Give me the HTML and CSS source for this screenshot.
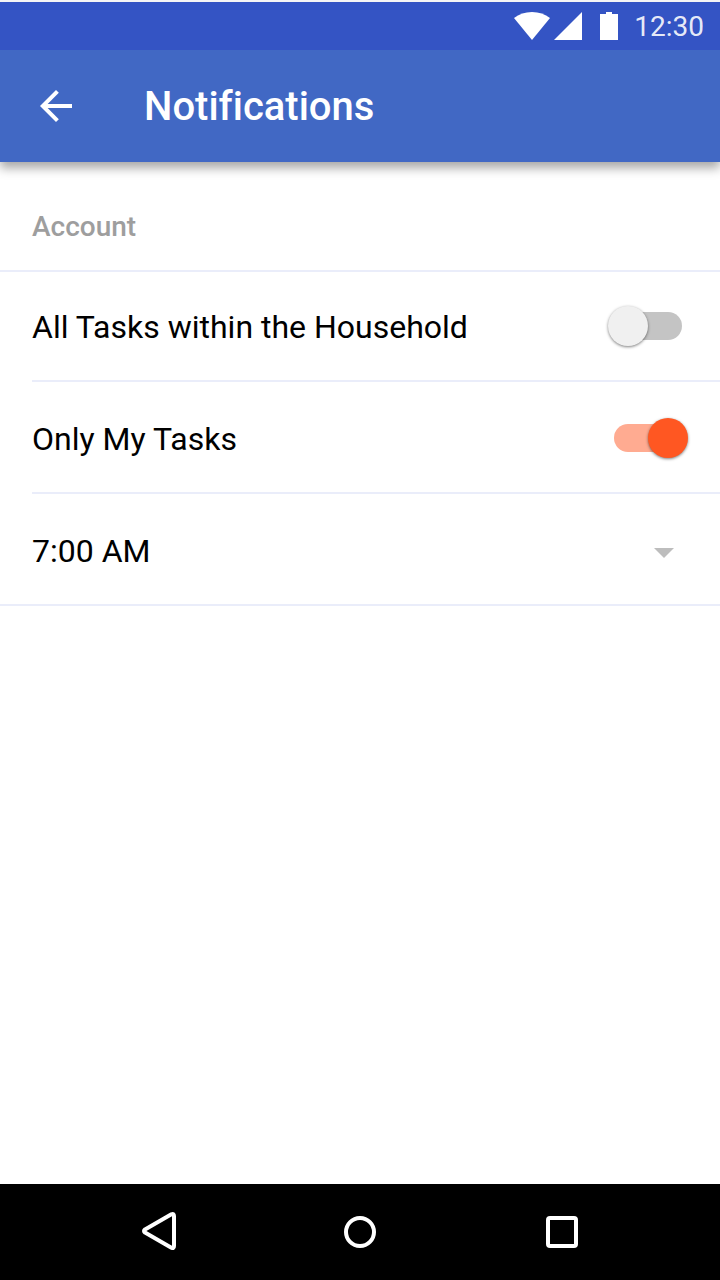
FILE: index.html
```html
<!DOCTYPE html>
<html lang="en">
<head>
  <meta charset="UTF-8" />
  <meta name="viewport" content="width=device-width, initial-scale=1.0" />
  <title>Notifications</title>
  <link rel="stylesheet" href="styles.css">
</head>
<body>
  <!-- Status bar -->
  <div class="status-bar">
    <svg class="status-wifi" width="36" height="28" viewBox="0 0 36 28" aria-hidden="true">
      <path d="M18 28 L0 6 C5 2 11 0 18 0 C25 0 31 2 36 6 Z" fill="#fff" />
    </svg>
    <svg class="status-signal" width="28" height="28" viewBox="0 0 28 28" aria-hidden="true">
      <path d="M0 28 H28 V0 Z" fill="#fff" />
    </svg>
    <svg class="status-battery" width="18" height="28" viewBox="0 0 18 28" aria-hidden="true">
      <path d="M6 0 H12 V2 H18 V28 H0 V2 H6 Z" fill="#fff" />
    </svg>
    <span class="status-time">12:30</span>
  </div>

  <header class="app-bar">
    <button type="button" class="back-btn" aria-label="Back">
      <svg width="48" height="48" viewBox="0 0 24 24" aria-hidden="true">
        <path d="M20 11H7.83l5.59-5.59L12 4l-8 8 8 8 1.41-1.41L7.83 13H20v-2z" fill="#fff" />
      </svg>
    </button>
    <h1>Notifications</h1>
  </header>

  <main>
    <h2 class="section-title">Account</h2>

    <div class="settings-list">
      <div class="setting">
        <label for="all-tasks">All Tasks within the Household</label>
        <input type="checkbox" class="switch" id="all-tasks" />
      </div>
      <div class="setting">
        <label for="my-tasks">Only My Tasks</label>
        <input type="checkbox" class="switch" id="my-tasks" checked />
      </div>
      <div class="setting time-setting">
        <select class="time-select" id="reminder-time" aria-label="Reminder time">
          <option selected>7:00 AM</option>
        </select>
        <svg class="select-arrow" width="20" height="10" viewBox="0 0 20 10" aria-hidden="true">
          <path d="M0 0 H20 L10 10 Z" fill="#bdbdbd" />
        </svg>
      </div>
    </div>
  </main>

  <!-- System navigation -->
  <nav class="nav-bar">
    <button type="button" aria-label="Back">
      <svg width="48" height="48" viewBox="0 0 48 48" aria-hidden="true">
        <path d="M11 21.4 L37.4 6.3 Q40 5 40 8 V38 Q40 41 37.4 39.7 L11 24.6 Q9 23 11 21.4 Z" />
      </svg>
    </button>
    <button type="button" aria-label="Home">
      <svg width="48" height="48" viewBox="0 0 48 48" aria-hidden="true">
        <circle cx="24" cy="24" r="14" />
      </svg>
    </button>
    <button type="button" aria-label="Recent apps">
      <svg width="48" height="48" viewBox="0 0 48 48" aria-hidden="true">
        <rect x="10" y="10" width="28" height="28" rx="2" />
      </svg>
    </button>
  </nav>
</body>
</html>
```
FILE: styles.css
```css
/* General Styles */
* {
  box-sizing: border-box;
}

body {
  display: flex;
  flex-direction: column;
  min-height: 100vh;
  margin: 0;
  font-family: Roboto, "Liberation Sans", sans-serif;
  font-size: 32px;
  font-variant-ligatures: none;
  color: #000;
  background-color: #fff;
}

button {
  display: flex;
  align-items: center;
  justify-content: center;
  padding: 0;
  background: none;
  border: none;
  cursor: pointer;
}

/* Status Bar */
.status-bar {
  position: relative;
  z-index: 1;
  display: flex;
  align-items: center;
  justify-content: flex-end;
  height: 50px;
  padding-right: 16px;
  background-color: #3454c4;
  border-top: 2px solid #f5f5f5;
}

.status-signal {
  margin-left: 4px;
}

.status-battery {
  margin-left: 18px;
}

.status-time {
  margin-left: 16px;
  padding-top: 2px;
  font-size: 28px;
  line-height: 32px;
  color: rgba(255, 255, 255, 0.9);
}

/* App Bar */
.app-bar {
  display: flex;
  align-items: center;
  gap: 64px;
  height: 112px;
  padding: 0 32px;
  color: #fff;
  background-color: #4168c4;
  box-shadow: 0 6px 10px rgba(0, 0, 0, 0.35);
}

.back-btn {
  width: 48px;
  height: 48px;
}

.app-bar h1 {
  margin: 0;
  padding-top: 2px;
  font-size: 40px;
  font-weight: 500;
  line-height: 48px;
}

/* Settings */
main {
  flex: 1;
}

.section-title {
  margin: 0;
  padding: 48px 32px 26px;
  font-size: 28px;
  font-weight: 500;
  line-height: 34px;
  color: #9e9e9e;
  border-bottom: 2px solid #eaedfa;
}

.settings-list {
  padding-left: 32px;
  border-bottom: 2px solid #eaedfa;
}

.setting {
  display: flex;
  align-items: center;
  justify-content: space-between;
  padding: 34px 32px 34px 0;
  line-height: 38px;
}

.setting + .setting {
  padding-top: 36px;
  border-top: 2px solid #eaedfa;
}

.setting label {
  padding-top: 2px;
}

/* Toggle Switch */
.switch {
  appearance: none;
  display: flex;
  align-items: center;
  justify-content: center;
  position: relative;
  width: 80px;
  height: 40px;
  margin: 0;
  cursor: pointer;
}

.switch::before {
  content: "";
  width: 68px;
  height: 28px;
  border-radius: 14px;
  background-color: #c4c4c4;
}

.switch::after {
  content: "";
  position: absolute;
  top: 0;
  left: 0;
  width: 40px;
  height: 40px;
  border-radius: 50%;
  background-color: #f0f0f0;
  box-shadow: 0 1px 3px rgba(0, 0, 0, 0.5);
}

.switch:checked::before {
  background-color: #ffab91;
}

.switch:checked::after {
  left: 40px;
  background-color: #ff5722;
}

/* Time Drop-down */
.time-setting {
  position: relative;
}

.time-select {
  appearance: none;
  flex: 1;
  height: 40px;
  padding: 2px 0 0;
  font: inherit;
  color: inherit;
  background: none;
  border: none;
  cursor: pointer;
}

.select-arrow {
  position: absolute;
  right: 46px;
  bottom: 46px;
  pointer-events: none;
}

/* Navigation Bar */
.nav-bar {
  display: flex;
  align-items: center;
  justify-content: center;
  gap: 106px;
  height: 96px;
  background-color: #000;
}

.nav-bar button {
  width: 96px;
  height: 96px;
}

.nav-bar svg {
  fill: none;
  stroke: #fff;
  stroke-width: 4;
  stroke-linejoin: round;
}
```
